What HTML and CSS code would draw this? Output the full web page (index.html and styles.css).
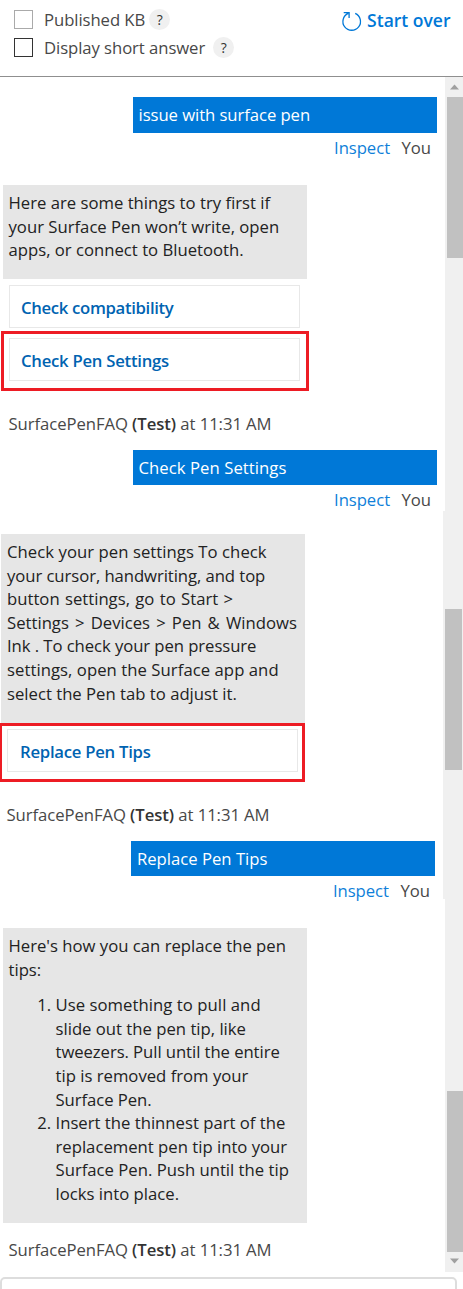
FILE: index.html
```html
<!DOCTYPE html>
<html lang="en">
<head>
<meta charset="utf-8">
<title>Test pane</title>
<link rel="stylesheet" href="styles.css">
</head>
<body>
<header class="toolbar">
  <div class="options">
    <label class="option muted"><span class="box"></span><span class="tight">Published KB</span><span class="help">?</span></label>
    <label class="option"><span class="box"></span><span class="tight">Display short answer</span><span class="help far">?</span></label>
  </div>
  <a class="restart">
    <svg width="22" height="22" viewBox="0 0 22 22" fill="none" stroke="#0078d7" stroke-width="1.3"><path d="M14.2 3.4A8.8 8.8 0 1 1 7.2 3.4M2.7 2.7H8.1V8"/></svg>
    <span>Start over</span>
  </a>
</header>

<section class="panel first">
  <div class="chat">
    <div class="user-msg"><span class="tight">issue with surface pen</span></div>
    <div class="meta-user"><a>Inspect</a><span>You</span></div>
    <div class="bot-msg">
      <span class="line">Here are some things to try first if</span>
      <span class="line">your Surface Pen won’t write, open</span>
      <span class="line">apps, or connect to Bluetooth.</span>
    </div>
    <div class="choices">
      <div class="choice"><span class="compact">Check compatibility</span></div>
      <div class="choice marked"><span>Check Pen Settings</span></div>
    </div>
    <div class="meta-bot"><span>SurfacePenFAQ <b>(Test)</b> at 11:31 AM</span></div>
    <div class="user-msg"><span class="loose">Check Pen Settings</span></div>
    <div class="meta-user"><a>Inspect</a><span>You</span></div>
  </div>
  <div class="scroll"><svg class="arrow" width="18" height="19"><path d="M5 12.5L9.5 7.5L14 12.5Z" fill="#a0a0a0"/></svg><div class="thumb"></div></div>
</section>

<section class="panel second">
  <div class="chat">
    <div class="bot-msg">
      <span class="line loose">Check your pen settings To check</span>
      <span class="line tight">your cursor, handwriting, and top</span>
      <span class="line roomy">button settings, go to Start &gt;</span>
      <span class="line wide">Settings &gt; Devices &gt; Pen &amp; Windows</span>
      <span class="line tight">Ink . To check your pen pressure</span>
      <span class="line loose">settings, open the Surface app and</span>
      <span class="line">select the Pen tab to adjust it.</span>
    </div>
    <div class="choices">
      <div class="choice marked"><span>Replace Pen Tips</span></div>
    </div>
    <div class="meta-bot"><span>SurfacePenFAQ <b>(Test)</b> at 11:31 AM</span></div>
    <div class="user-msg"><span>Replace Pen Tips</span></div>
    <div class="meta-user"><a>Inspect</a><span>You</span></div>
  </div>
  <div class="scroll"><div class="thumb"></div></div>
</section>

<section class="panel third">
  <div class="chat">
    <div class="bot-msg">
      <span class="line">Here's how you can replace the pen</span>
      <span class="line">tips:</span>
      <ol class="steps">
        <li><span class="line loose">Use something to pull and</span>
          <span class="line">slide out the pen tip, like</span>
          <span class="line tight">tweezers. Pull until the entire</span>
          <span class="line">tip is removed from your</span>
          <span class="line tight">Surface Pen.</span></li>
        <li><span class="line">Insert the thinnest part of the</span>
          <span class="line">replacement pen tip into your</span>
          <span class="line">Surface Pen. Push until the tip</span>
          <span class="line">locks into place.</span></li>
      </ol>
    </div>
    <div class="meta-bot"><span>SurfacePenFAQ <b>(Test)</b> at 11:31 AM</span></div>
  </div>
  <div class="scroll"><div class="thumb"></div><svg class="arrow" width="18" height="19"><path d="M5 6.5H14L9.5 11.5Z" fill="#a0a0a0"/></svg></div>
</section>
<div class="composer"></div>
</body>
</html>
```

FILE: styles.css
```css
*, *::after { box-sizing: border-box; }
html, body { margin: 0; height: 1289px; overflow: hidden; }
body { background: #fff; color: #222; font: 16.7px/23.6px "Open Sans", "Noto Sans", sans-serif; white-space: nowrap; }
.tight { letter-spacing: -0.07px; }
.loose { letter-spacing: 0.05px; }
.roomy { word-spacing: 1px; }
.wide { word-spacing: 1.8px; }
.toolbar { display: flex; justify-content: space-between; height: 77px; padding: 6px 12.5px 0 14px; border-bottom: 1px solid #8f8f8f; color: #484848; }
.options { display: flex; flex-direction: column; }
.option { display: flex; align-items: center; height: 28px; }
.box { width: 19px; height: 19px; margin: -1px 11px 0 0; border: 1px solid #333; }
.muted .box { border-color: #aaa; }
.help { width: 21px; height: 21px; margin: -2px 0 0 4px; border-radius: 50%; background: #f0f0f0; color: #333; font-size: 14px; line-height: 21px; text-align: center; }
.help.far { margin-left: 8px; }
.restart { display: flex; align-items: center; gap: 4px; height: 30px; color: #0078d7; font-weight: 600; font-size: 17.5px; }
.restart svg { margin-right: 0.5px; }
.panel { display: flex; justify-content: space-between; }
.first { height: 434px; }
.second { height: 388px; }
.third { height: 373px; }
.chat { display: flex; flex-direction: column; width: 437px; padding-left: 3px; }
.chat > * { flex-shrink: 0; }
.first .chat { padding-top: 20px; }
.second .chat { width: 435.4px; padding: 23px 0 0 1px; }
.third .chat { padding-top: 29px; }
.user-msg { align-self: flex-end; width: 304px; height: 35.5px; padding: 6px 5.5px; background: #0078d7; color: #fff; }
.meta-user { display: flex; justify-content: flex-end; gap: 11.5px; height: 30px; padding: 3px 6px 0 0; color: #484848; letter-spacing: -0.05px; }
.second .meta-user { padding-right: 5.5px; }
.meta-user a { color: #0f7fd9; }
.bot-msg { width: 304px; padding: 6px 5.5px; background: #e6e6e6; }
.first .bot-msg { height: 94px; margin-top: 22.5px; }
.second .bot-msg { height: 189px; padding-left: 6px; }
.third .bot-msg { height: 295px; }
.line { display: block; width: max-content; }
.choices { display: flex; flex-direction: column; gap: 10px; padding: 6px 0 0 6px; }
.choice { position: relative; width: 291.4px; height: 43px; padding: 10px 11px; border: 1px solid #e8e8e8; color: #0063b1; font-weight: 600; letter-spacing: -0.25px; }
.second .choice { padding-left: 12px; }
.compact { letter-spacing: -0.32px; }
.marked::after { content: ""; position: absolute; left: -9px; top: -8px; width: 308px; height: 60px; border: 3px solid #ed1c24; }
.second .marked::after { top: -7px; width: 306px; height: 59px; }
.meta-bot { height: 68.5px; padding: 31px 0 0 5.5px; color: #484848; letter-spacing: -0.07px; }
.third .meta-bot { padding-top: 15px; }
.meta-bot b { color: #333; font-weight: 600; }
.steps { margin: 12px 0 0; padding-left: 47px; }
.scroll { width: 18px; padding-left: 1.5px; background: #f0f0f0; }
.second .scroll { width: 20px; padding: 98px 1.5px 0 2px; }
.third .scroll { padding-top: 192px; }
.thumb { height: 161px; background: #c1c1c1; }
.arrow { display: block; margin-left: -1.5px; }
.first .arrow { height: 20px; }
.composer { width: 457px; height: 30px; margin-top: 5px; border: 2px solid #ddd; border-radius: 5px; }
```
